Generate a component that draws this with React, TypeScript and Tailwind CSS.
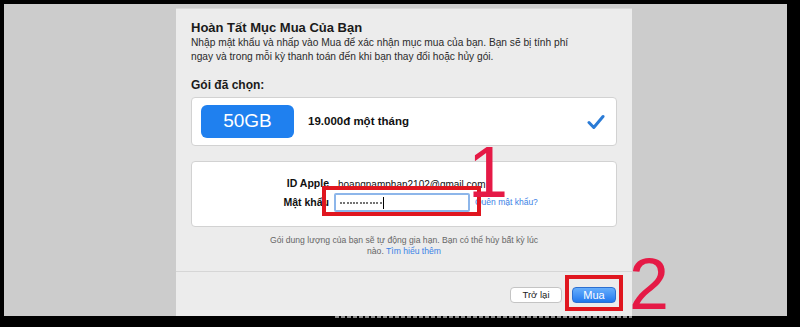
import React from "react";

export default function App() {
  const font = { fontFamily: '"Liberation Sans", Arial, sans-serif' };
  const dots = Array.from({ length: 13 });
  return (
    <div className="relative w-[800px] h-[327px] bg-black overflow-hidden" style={font}>
      <div className="absolute left-[4px] top-[4px] w-[783px] h-[312px] bg-[#cccccc]" />
      <div className="relative flex pl-[176px] pt-[8px]">
        {/* dialog */}
        <div className="w-[456px] h-[308px] bg-[#ececec] border-t border-[#d9d9d9] flex flex-col">
          <div className="px-[15px] pt-[11px]">
            <div className="text-[13px] leading-[16px] font-bold text-[#1a1a1a]">Hoàn Tất Mục Mua Của Bạn</div>
            <div className="text-[10.2px] leading-[14px] text-[#2a2a2a]">
              Nhập mật khẩu và nhấp vào Mua để xác nhận mục mua của bạn. Bạn sẽ bị tính phí
              <br />
              ngay và trong mỗi kỳ thanh toán đến khi bạn thay đổi hoặc hủy gói.
            </div>
            <div className="mt-[13px] text-[12px] leading-[16px] font-bold text-[#1a1a1a]">Gói đã chọn:</div>
            <div className="mt-[4px] h-[49px] bg-white border border-[#d2d2d2] rounded-[4px] flex items-center pl-[9px] pr-[11px]">
              <div className="w-[93px] h-[33px] rounded-[6px] bg-[#1f80ef] flex items-center justify-center text-white text-[19px]">50GB</div>
              <div className="ml-[14px] text-[11.5px] font-bold text-[#111]">19.000đ một tháng</div>
              <div className="flex-1" />
              <svg width="18" height="16" viewBox="0 0 18 16">
                <path d="M2 8.5 L6.8 13.5 L16 2.5" fill="none" stroke="#2a7bd6" strokeWidth="3" strokeLinecap="round" strokeLinejoin="round" />
              </svg>
            </div>
            <div className="mt-[15px] h-[66px] bg-white border border-[#d2d2d2] rounded-[4px] pt-[14px]">
              <div className="flex items-center h-[16px]">
                <div className="w-[137px] text-right text-[10.5px] font-bold text-[#111]">ID Apple</div>
                <div className="ml-[9px] text-[10px] text-[#111]">hoangnamphan2102@gmail.com</div>
              </div>
              <div className="flex items-center mt-[1px] h-[19px]">
                <div className="w-[137px] text-right text-[10.5px] font-bold text-[#111]">Mật khẩu</div>
                <div className="ml-[5px] w-[136px] h-[19px] bg-white border-2 border-[#8db6ea] rounded-[2px] flex items-center pl-[4px]">
                  <div className="flex items-center gap-[1.3px] mt-[1px]">
                    {dots.map((_, i) => (
                      <span key={i} className="w-[2px] h-[2px] rounded-full bg-[#444]" />
                    ))}
                  </div>
                  <span className="ml-[1px] w-[1px] h-[12px] bg-black" />
                </div>
                <div className="ml-[5px] text-[8.5px] text-[#3b82e6]">Quên mật khẩu?</div>
              </div>
            </div>
            <div className="mt-[8px] text-center text-[8.6px] leading-[11px] text-[#666]">
              Gói dung lượng của bạn sẽ tự động gia hạn. Bạn có thể hủy bất kỳ lúc
              <br />
              nào. <span className="text-[#3b82e6]">Tìm hiểu thêm</span>
            </div>
          </div>
          <div className="mt-[14px] border-t border-[#d6d6d6] flex-1 flex justify-end items-start pt-[15px] pr-[16px] gap-[10px]">
            <div className="w-[52px] h-[16px] bg-white border border-[#c4c4c4] rounded-[4px] flex items-center justify-center text-[9.5px] text-[#222]">Trở lại</div>
            <div className="w-[44px] h-[16px] rounded-[4px] bg-gradient-to-b from-[#66aefc] to-[#1f78ee] border border-[#2c6fd0] flex items-center justify-center text-[11px] text-white">Mua</div>
          </div>
        </div>
      </div>
      {/* faint bottom strip */}
      <div className="absolute left-[335px] top-[316px] w-[297px] h-[2px] bg-[repeating-linear-gradient(90deg,#8a8a8a_0px,#8a8a8a_4px,transparent_4px,transparent_6px)]" />
      {/* annotations */}
      <div className="absolute left-[322px] top-[186px] w-[159px] h-[30px] border-[4px] border-[#e0161f]" />
      <div className="absolute left-[565px] top-[275px] w-[58px] h-[36px] border-[4px] border-[#e0161f]" />
      <div className="absolute left-[468px] top-[136px] text-[72px] leading-[72px] text-[#e51a46]">1</div>
      <div className="absolute left-[629px] top-[248px] text-[72px] leading-[72px] text-[#e51a46]">2</div>
    </div>
  );
}
